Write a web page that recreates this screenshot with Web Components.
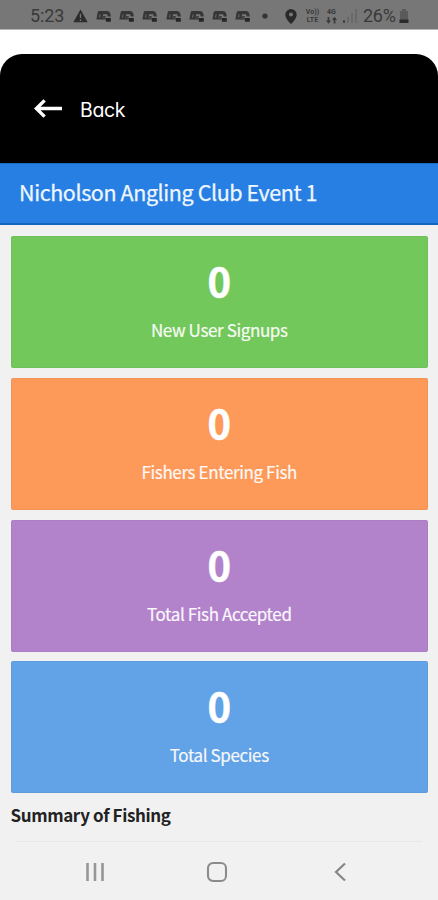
<!DOCTYPE html>
<html lang="en">
<head>
<meta charset="utf-8">
<meta name="viewport" content="width=device-width">
<title>Nicholson Angling Club Event 1</title>
<style>
body{margin:0;background:#fff;font-family:"Noto Sans CJK SC","Noto Sans",sans-serif}
</style>
</head>
<body>
<club-app></club-app>
<script>
const define = (name, html, setup) => customElements.define(name, class extends HTMLElement {
  connectedCallback() {
    if (this.shadowRoot) return;
    const root = this.attachShadow({mode: 'open'});
    const t = document.createElement('template');
    t.innerHTML = html;
    root.append(t.content.cloneNode(true));
    if (setup) setup(this, root);
  }
});

const glyphs = {
  warning: '<svg width="15" height="14" viewBox="0 0 15 14"><path d="M7.5 .5 14.7 13.3H.3Z" fill="#2c2c2c"/><path d="M7.5 4.8v4.3M7.5 10.3v1.6" stroke="#777" stroke-width="1.3"/></svg>',
  app: '<svg width="15" height="14" viewBox="0 0 15 14"><path d="M2.6 2H11C13.6 2.2 14.6 4 14.8 7.6H11.8L11 5.2H7.2L6.2 10.6H.4L1.6 3.6Z" fill="#363636"/><path d="M3.6 5.4H4.6L4 8.4H3Z" fill="#6c6c6c"/><path d="M6.4 7H10L8.8 10.8H5.6Z" fill="#424242"/><path d="M9.4 9H14.8V12.8H10Z" fill="#262626"/></svg>',
  dot: '<svg width="6" height="14" viewBox="0 0 6 14"><circle cx="3" cy="7" r="2.6" fill="#333"/></svg>',
  pin: '<svg width="12" height="15" viewBox="0 0 12 15"><path d="M6 0A5.7 5.7 0 0 0 .3 5.7C.3 9.8 6 15 6 15S11.7 9.8 11.7 5.7A5.7 5.7 0 0 0 6 0Z" fill="#292929"/><circle cx="6" cy="5.6" r="2" fill="#777"/></svg>',
  arrows: '<svg width="11" height="7" viewBox="0 0 11 7"><path d="M3.3 0v3.5H5L2.5 6.8 0 3.5h1.6V0ZM7.7 6.5V3H6l2.5-3.3L11 3H9.4v3.5Z" fill="#393939"/></svg>',
  signal: '<svg width="14" height="14" viewBox="0 0 14 14"><path d="M0 11h2v3H0Z" fill="#444"/><path d="M4 8h2v6H4ZM8 4h2v10H8ZM12 0h2v14h-2Z" fill="#696969"/></svg>',
  battery: '<svg width="10" height="14" viewBox="0 0 10 14"><path d="M3 0h4v2h2v8.5H1V2h2Z" fill="#5a5a5a"/><path d="M.5 10.4h9V14h-9Z" fill="#2b2b2b"/></svg>',
  back: '<svg width="30" height="22" viewBox="0 0 30 22"><path d="M30 10.5H4.5M12.6 2.4 4.4 10.5l8.2 8.1" fill="none" stroke="#fff" stroke-width="3.4"/></svg>',
  recents: '<svg width="20" height="20" viewBox="0 0 20 20"><path d="M2.5 1v18M10 1v18M17.5 1v18" stroke="#969696" stroke-width="2.6"/></svg>',
  home: '<svg width="22" height="22" viewBox="0 0 22 22"><rect x="2" y="2" width="18" height="18" rx="5" fill="none" stroke="#8c8c8c" stroke-width="2.1"/></svg>',
  chevron: '<svg width="14" height="20" viewBox="0 0 14 20"><path d="M12 1.5 3 10l9 8.5" fill="none" stroke="#868686" stroke-width="2.2"/></svg>'
};

define('ui-glyph', '<style>:host{display:block;flex:none;line-height:0}svg{display:block}</style><span></span>',
  (el, root) => { root.querySelector('span').innerHTML = glyphs[el.getAttribute('name')]; });

define('status-bar', `<style>
  :host{display:flex;box-sizing:border-box;height:30px;padding:3px 29px 0 30px;background:#777;border-bottom:1px solid #b5b5b5;align-items:center;justify-content:space-between;color:#393939;font-family:Roboto,sans-serif}
  div{display:flex;align-items:center}
  .t{font-size:18px;line-height:24px;width:35px;margin-right:8px;letter-spacing:-.1px}
  .apps{gap:8.2px;margin-left:8px}
  .dot{margin-left:12px}
  .net{display:flex;flex-direction:column;align-items:center;font-size:7px;line-height:8.5px;font-weight:700;width:17px;white-space:nowrap}
  .net ui-glyph{width:11px}
  .pct{font-size:18px;line-height:24px;letter-spacing:-.3px;width:36px}
</style>
<div><span class="t">5:23</span><ui-glyph name="warning"></ui-glyph>
<div class="apps">${'<ui-glyph name="app"></ui-glyph>'.repeat(7)}</div><ui-glyph class="dot" name="dot"></ui-glyph></div>
<div><ui-glyph name="pin"></ui-glyph><span class="net" style="margin-left:7px"><span>Vo))</span><span>LTE</span></span><span class="net" style="margin:0 3px 0 2px"><span>4G</span><ui-glyph name="arrows"></ui-glyph></span><ui-glyph name="signal"></ui-glyph><span class="pct" style="margin-left:6px">26%</span><ui-glyph name="battery"></ui-glyph></div>`);

define('back-header', `<style>
  :host{display:flex;box-sizing:border-box;height:109px;margin-top:24px;padding:0 0 0 32px;border-radius:22px 22px 0 0;background:#000;color:#fff;align-items:center;gap:18px}
  ui-glyph{margin-top:1px}
  span{font:400 19.5px/26px Inter,sans-serif;font-feature-settings:"cv11";letter-spacing:-.35px;margin-top:3px}
</style><ui-glyph name="back"></ui-glyph><span><slot></slot></span>`);

define('event-title', `<style>
  :host{display:flex;box-sizing:border-box;height:62px;padding:0 19px 3px;background:#277fe3;border-top:1px solid #196cca;border-bottom:2px solid #1264bd;color:#eef6ff;align-items:center;font-size:21.5px;letter-spacing:-.41px;line-height:34px;white-space:nowrap;-webkit-text-stroke:.25px #eef6ff}
</style><span><slot></slot></span>`);

define('stat-card', `<style>
  :host{display:flex;box-sizing:border-box;height:132px;border-radius:2px;padding-top:22px;flex-direction:column;align-items:center;color:#fff;background:var(--card);box-shadow:inset 0 0 0 1px rgba(70,80,90,.07)}
  b{font-size:40px;line-height:44px;font-weight:700;letter-spacing:0;-webkit-text-stroke:.5px #fff}
  span{font-size:17px;letter-spacing:-.38px;line-height:26px;margin-top:15px;opacity:.94;white-space:nowrap;-webkit-text-stroke:.2px #fff}
</style><b></b><span><slot></slot></span>`,
  (el, root) => { root.querySelector('b').textContent = el.getAttribute('value'); });

define('nav-bar', `<style>
  :host{display:flex;box-sizing:border-box;height:58px;padding:2px 91px 0 85px;align-items:center;justify-content:space-between}
  ui-glyph[name=home]{margin-right:4px}
</style><ui-glyph name="recents"></ui-glyph><ui-glyph name="home"></ui-glyph><ui-glyph name="chevron"></ui-glyph>`);

define('club-app', `<style>
  :host{display:flex;flex-direction:column;height:900px;overflow:hidden;background:#fff}
  main{flex:1;background:#f1f1f1;padding:11.4px 10px 0;display:flex;flex-direction:column}
  .cards{display:grid;gap:9.7px;margin-left:.5px}
  h2{margin:8px 0 0 .5px;font-size:17px;letter-spacing:-.38px;line-height:28px;font-weight:700;color:#222}
  hr{width:406px;height:1px;border:0;margin:11.5px 0 0 6px;background:#e7e7e7}
  nav-bar{margin:0 -10px}
</style>
<status-bar></status-bar>
<back-header>Back</back-header>
<event-title>Nicholson Angling Club Event 1</event-title>
<main>
  <div class="cards">
    <stat-card value="0" style="--card:#73c85b">New User Signups</stat-card>
    <stat-card value="0" style="--card:#fd9959">Fishers Entering Fish</stat-card>
    <stat-card value="0" style="--card:#b283cb">Total Fish Accepted</stat-card>
    <stat-card value="0" style="--card:#62a2e6">Total Species</stat-card>
  </div>
  <h2>Summary of Fishing</h2>
  <hr>
  <nav-bar></nav-bar>
</main>`);
</script>
</body>
</html>
